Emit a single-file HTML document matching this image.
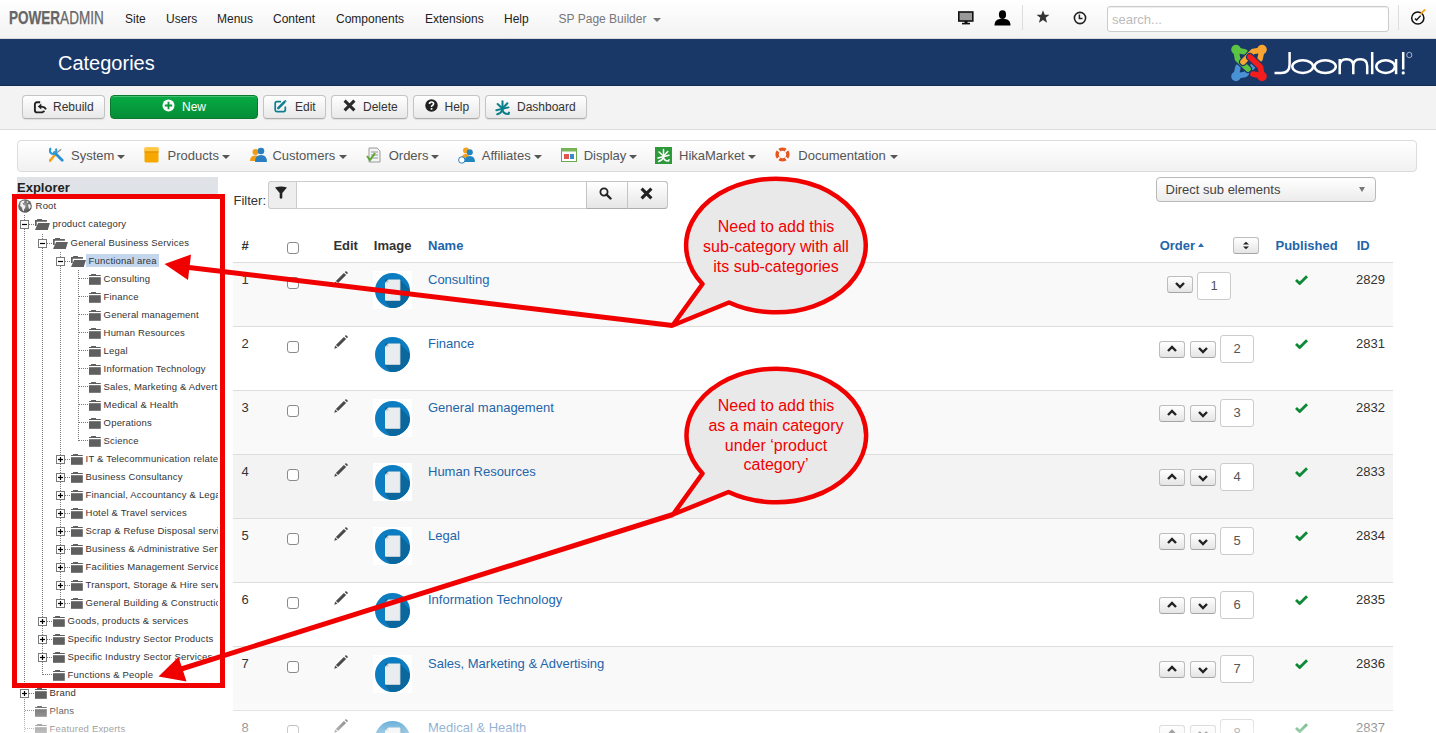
<!DOCTYPE html><html><head><meta charset="utf-8"><style>
*{margin:0;padding:0;box-sizing:border-box}
html,body{width:1436px;height:733px;overflow:hidden;background:#fff;font-family:"Liberation Sans",sans-serif;font-size:13px;color:#333;position:relative}
.abs{position:absolute}
.t{position:absolute;white-space:nowrap;line-height:1}
.nav{position:absolute;left:0;top:0;width:1436px;height:39px;background:linear-gradient(#fff,#f2f2f2);}
.hdr{position:absolute;left:0;top:39px;width:1436px;height:47px;background:#1a3867;border-bottom:1px solid #142d57}
.sub{position:absolute;left:0;top:86px;width:1436px;height:44px;background:#f3f3f3;border-bottom:1px solid #ddd}
.btn{position:absolute;top:95px;height:24px;border:1px solid #c4c4c4;border-bottom-color:#adadad;border-radius:4px;background:linear-gradient(#fff,#e8e8e8);box-shadow:0 1px 1px rgba(0,0,0,.08)}
.bt{position:absolute;top:100.2px;font-size:12px;color:#333;line-height:15px;white-space:nowrap}
.mb{position:absolute;left:17px;top:140px;width:1400px;height:32px;border:1px solid #dcdcdc;border-radius:4px;background:linear-gradient(#fff,#f1f1f1)}
.mt{position:absolute;top:148px;font-size:13px;color:#555;line-height:15px;white-space:nowrap}
.caret{position:absolute;width:0;height:0;border-left:4px solid transparent;border-right:4px solid transparent;border-top:4px solid #555}
.tr{position:absolute;font-size:9.5px;letter-spacing:0.18px;color:#333;line-height:1;white-space:nowrap}
.row{position:absolute;left:233px;width:1160px;height:64px;border-top:1px solid #ddd}
.cb{position:absolute;width:12px;height:12px;border:1px solid #8a8a8a;border-radius:3px;background:#fff}
.ob{position:absolute;width:26px;height:17px;border:1px solid #bdbdbd;border-bottom-color:#a5a5a5;border-radius:3px;background:linear-gradient(#fff,#e5e5e5)}
.oi{position:absolute;width:34px;height:28px;border:1px solid #ccc;border-radius:3px;background:#fff;font-size:13px;color:#555;text-align:center;line-height:26px}
.lnk{color:#2465aa}
</style></head><body>
<div class="nav"></div>
<div class="abs" style="left:0;top:38px;width:1436px;height:1px;background:#d9d9d9"></div>
<div class="t" style="left:9px;top:10.3px;font-size:17.7px;color:#666;-webkit-text-stroke:0.25px #666;transform:scaleX(0.765);transform-origin:0 0"><b>POWER</b>ADMIN</div>
<div class="t" style="left:125px;top:13.1px;font-size:12px;color:#222">Site</div>
<div class="t" style="left:166px;top:13.1px;font-size:12px;color:#222">Users</div>
<div class="t" style="left:217px;top:13.1px;font-size:12px;color:#222">Menus</div>
<div class="t" style="left:273px;top:13.1px;font-size:12px;color:#222">Content</div>
<div class="t" style="left:336px;top:13.1px;font-size:12px;color:#222">Components</div>
<div class="t" style="left:425px;top:13.1px;font-size:12px;color:#222">Extensions</div>
<div class="t" style="left:504px;top:13.1px;font-size:12px;color:#222">Help</div>
<div class="t" style="left:558.6px;top:13.1px;font-size:12px;color:#777">SP Page Builder</div>
<div class="caret" style="left:653px;top:18px;border-top-color:#777"></div>
<svg class="abs" style="left:958px;top:11px" width="16" height="14" viewBox="0 0 16 14"><rect x="0.8" y="1" width="14" height="9" fill="#999" stroke="#111" stroke-width="1.6"/><rect x="6.5" y="10" width="3" height="2" fill="#111"/><rect x="4" y="11.8" width="8" height="1.6" fill="#111"/></svg>
<svg class="abs" style="left:994px;top:10px" width="17" height="16" viewBox="0 0 17 16"><ellipse cx="8.5" cy="4.6" rx="3.6" ry="4.4" fill="#000"/><path d="M0.5 15.5 C0.5 11 3 9.5 6 9 L11 9 C14 9.5 16.5 11 16.5 15.5 Z" fill="#000"/></svg>
<div class="abs" style="left:1022px;top:5px;width:1px;height:25px;background:#ddd"></div>
<svg class="abs" style="left:1036px;top:10px" width="14" height="13" viewBox="0 0 24 23"><path d="M12 0.5 L15 8.5 L23.5 8.6 L16.8 13.8 L19.2 22.5 L12 17.5 L4.8 22.5 L7.2 13.8 L0.5 8.6 L9 8.5 Z" fill="#333"/></svg>
<svg class="abs" style="left:1073px;top:11px" width="14" height="14" viewBox="0 0 14 14"><circle cx="7" cy="7" r="5.6" fill="none" stroke="#222" stroke-width="1.6"/><path d="M6.4 3.6 V7.6 H9.5" fill="none" stroke="#222" stroke-width="1.5"/></svg>
<div class="abs" style="left:1107px;top:6px;width:282px;height:26px;border:1px solid #ccc;border-radius:3px;background:#fff;box-shadow:inset 0 1px 1px rgba(0,0,0,.075)"></div>
<div class="t" style="left:1112px;top:13px;color:#bbb">search...</div>
<div class="abs" style="left:1398px;top:5px;width:1px;height:25px;background:#ddd"></div>
<svg class="abs" style="left:1410px;top:8px" width="18" height="18" viewBox="0 0 18 18"><circle cx="7.8" cy="10" r="6.1" fill="none" stroke="#111" stroke-width="1.5"/><path d="M5 10.6 L6.6 12 L10.6 7.6" fill="none" stroke="#111" stroke-width="1.4"/><path d="M11 5.6 L12.1 4.5 M13 3.6 L14.6 2" stroke="#f7a21b" stroke-width="1.9" stroke-linecap="round"/></svg>
<div class="hdr"></div>
<div class="t" style="left:58px;top:53px;font-size:20px;color:#fff">Categories</div>
<svg class="abs" style="left:1225px;top:42px" width="200" height="45" viewBox="0 0 200 45">
<g transform="translate(6,3)">
<g fill="none" stroke-linecap="round" stroke-linejoin="round">
<path d="M5 31 L7 22 M5 31 L14 29.5 L24 19" stroke="#1a3867" stroke-width="8"/>
<path d="M5 31 L7 22 M5 31 L14 29.5 L24 19" stroke="#4a92d6" stroke-width="5.6"/>
<path d="M5 5 L14 7 M5 5 L6.5 14 L17 24" stroke="#1a3867" stroke-width="8"/>
<path d="M5 5 L14 7 M5 5 L6.5 14 L17 24" stroke="#5bc443" stroke-width="5.6"/>
<path d="M31 5 L29 14 M31 5 L22 6.5 L12 17" stroke="#1a3867" stroke-width="8"/>
<path d="M31 5 L29 14 M31 5 L22 6.5 L12 17" stroke="#f9a531" stroke-width="5.6"/>
<path d="M31 31 L22 29 M31 31 L29.5 22 L19 12" stroke="#1a3867" stroke-width="8"/>
<path d="M31 31 L22 29 M31 31 L29.5 22 L19 12" stroke="#f41c1c" stroke-width="5.6"/>
</g>
<circle cx="5" cy="4.6" r="4.8" fill="#5bc443"/><circle cx="31" cy="4.6" r="4.8" fill="#f9a531"/>
<circle cx="5" cy="31.4" r="4.8" fill="#4a92d6"/><circle cx="31" cy="31.4" r="4.8" fill="#f41c1c"/>
</g>
<g fill="none" stroke="#fff" stroke-width="2.5">
<path d="M64.6 10 V22.5 Q64.6 31 56 31 H49.5"/>
<ellipse cx="77.7" cy="24.6" rx="10.4" ry="6.3"/>
<ellipse cx="100.2" cy="24.6" rx="10.6" ry="6.3"/>
<path d="M114.7 17 V32.2 M114.7 24 Q114.7 17.3 121.4 17.3 Q128.3 17.3 128.3 24 V32.2 M128.3 24 Q128.3 17.3 135.2 17.3 Q142.2 17.3 142.2 24 V32.2"/>
<path d="M147.2 10 V32.2"/>
<ellipse cx="160.6" cy="24.6" rx="9.3" ry="6.3"/>
<path d="M171.1 17 V32.2"/>
<path d="M178.2 10 V27.5"/>
<ellipse cx="184.3" cy="13" rx="2.6" ry="2.7" stroke-width="0.8" stroke="#c8d0e0"/>
</g>
<circle cx="178.2" cy="30.9" r="1.6" fill="#fff"/>
</svg>
<div class="sub"></div>
<div class="btn" style="left:22px;width:83px"></div>
<div class="bt" style="left:53px">Rebuild</div>
<div class="btn" style="left:263px;width:63px"></div>
<div class="bt" style="left:295px">Edit</div>
<div class="btn" style="left:331px;width:77px"></div>
<div class="bt" style="left:363px">Delete</div>
<div class="btn" style="left:413px;width:67px"></div>
<div class="bt" style="left:444.5px">Help</div>
<div class="btn" style="left:485px;width:102px"></div>
<div class="bt" style="left:517px">Dashboard</div>
<div class="abs" style="left:110px;top:95px;width:148px;height:24px;border:1px solid #0a7a2c;border-radius:4px;background:linear-gradient(#07ab45,#058d35);box-shadow:inset 0 1px rgba(255,255,255,.25)"></div>
<div class="bt" style="left:182px;color:#fff">New</div>
<svg class="abs" style="left:33px;top:100px" width="14" height="14" viewBox="0 0 14 14"><path d="M7.2 2.3 H4 Q1.9 2.3 1.9 4.4 V10.2 Q1.9 12.4 4.1 12.4 H9.3 L11.5 11" fill="none" stroke="#222" stroke-width="1.9"/><path d="M4.8 6.5 L8.3 3.6 V9.4 Z" fill="#222"/><path d="M7.5 6.6 Q11.5 6.4 13 9.4" fill="none" stroke="#222" stroke-width="1.8"/></svg>
<svg class="abs" style="left:162.3px;top:99px" width="13" height="13" viewBox="0 0 13 13"><circle cx="6.5" cy="6.5" r="6" fill="#fff"/><path d="M6.5 2.8 V10.2 M2.8 6.5 H10.2" stroke="#06963a" stroke-width="1.8"/></svg>
<svg class="abs" style="left:274px;top:100px" width="13" height="13" viewBox="0 0 13 13"><path d="M7 1.6 H2.8 Q1.2 1.6 1.2 3.3 V10 Q1.2 11.6 2.8 11.6 H9.6 Q11.3 11.6 11.3 10 V6.5" fill="none" stroke="#0f7f8e" stroke-width="1.7"/><path d="M4.3 8.2 L10.3 2.2" stroke="#0f7f8e" stroke-width="2.6" stroke-linecap="round"/><path d="M11.2 1.3 L12 0.5" stroke="#0f7f8e" stroke-width="2.2"/></svg>
<svg class="abs" style="left:342.6px;top:99.4px" width="13" height="13" viewBox="0 0 13 13"><path d="M1.6 1.6 L11.4 11.4 M11.4 1.6 L1.6 11.4" stroke="#2a2a2a" stroke-width="3"/></svg>
<svg class="abs" style="left:425px;top:99.4px" width="13" height="13" viewBox="0 0 13 13"><circle cx="6.5" cy="6.5" r="6.2" fill="#222"/><path d="M4.5 5 Q4.5 3 6.5 3 Q8.6 3 8.6 4.8 Q8.6 6 7.2 6.6 Q6.5 7 6.5 8" fill="none" stroke="#fff" stroke-width="1.6"/><rect x="5.7" y="9" width="1.7" height="1.7" fill="#fff"/></svg>
<svg class="abs" style="left:494px;top:99px" width="17" height="17" viewBox="0 0 17 17"><g stroke="#0b7f8a" stroke-width="2" fill="none" stroke-linecap="round"><path d="M8.5 2.3 V10 Q8.5 15 14.5 15 L15 13.6"/><path d="M3.6 5 L8.5 9.5 L13.4 4.2"/><path d="M2.3 11.3 L14.5 8.4"/><path d="M8.3 11 Q7.2 14.3 3.2 15.2"/></g></svg>
<div class="mb"></div>
<div class="mt" style="left:71px">System</div>
<div class="caret" style="left:117px;top:155px"></div>
<div class="mt" style="left:167.6px">Products</div>
<div class="caret" style="left:222.3px;top:155px"></div>
<div class="mt" style="left:272.4px">Customers</div>
<div class="caret" style="left:338.6px;top:155px"></div>
<div class="mt" style="left:388.7px">Orders</div>
<div class="caret" style="left:431px;top:155px"></div>
<div class="mt" style="left:481.8px">Affiliates</div>
<div class="caret" style="left:533.6px;top:155px"></div>
<div class="mt" style="left:583.7px">Display</div>
<div class="caret" style="left:628.8px;top:155px"></div>
<div class="mt" style="left:679px">HikaMarket</div>
<div class="caret" style="left:747.5px;top:155px"></div>
<div class="mt" style="left:798.3px">Documentation</div>
<div class="caret" style="left:889.5px;top:155px"></div>
<svg class="abs" style="left:49px;top:147px" width="15" height="15" viewBox="0 0 15 15"><path d="M5.6 7.6 L12.2 2.2" stroke="#888" stroke-width="1.1"/><path d="M1 13.6 L5.8 8" stroke="#f5a01a" stroke-width="2.6" stroke-linecap="round"/><path d="M5.5 5.5 L13.2 13.2" stroke="#2a8fd0" stroke-width="2.8" stroke-linecap="round"/><path d="M2 1.2 A3.2 3.2 0 1 0 6.6 1.6" fill="none" stroke="#2a9bd8" stroke-width="2.2"/></svg>
<svg class="abs" style="left:144px;top:147px" width="15" height="16" viewBox="0 0 15 16"><rect x="0.5" y="0.5" width="14" height="15" rx="1.5" fill="#f6a800"/><rect x="0.5" y="0.5" width="14" height="4" fill="#ffc640"/><path d="M0.5 5 H14.5" stroke="#d98b00" stroke-width="1"/></svg>
<svg class="abs" style="left:250px;top:147px" width="17" height="15" viewBox="0 0 17 15"><circle cx="5.5" cy="5" r="3" fill="#f39c12"/><path d="M0 14 Q0 8.5 5.5 8.5 Q9 8.5 10 11 L10 14Z" fill="#f39c12"/><circle cx="11" cy="4" r="3.3" fill="#2a7fc0"/><path d="M5 15 Q5 8 11 8 Q17 8 17 15Z" fill="#2a7fc0"/></svg>
<svg class="abs" style="left:366px;top:147px" width="16" height="16" viewBox="0 0 16 16"><path d="M3 1 H11 L14 4 V15 H3 Z" fill="#f4f4f4" stroke="#9a9a9a"/><path d="M5 5 H12 M5 8 H12 M5 11 H12" stroke="#999"/><path d="M1 9 L4 13 L9 6" fill="none" stroke="#5aa832" stroke-width="2"/></svg>
<svg class="abs" style="left:458px;top:147px" width="17" height="17" viewBox="0 0 17 17"><circle cx="8" cy="3.6" r="3" fill="#f5a01a"/><path d="M3.5 12 Q3.5 7 8 7 Q10 7 11 8 L9 12Z" fill="#f5a01a"/><circle cx="11.8" cy="5.2" r="3" fill="#1f86c0"/><path d="M6.5 15 Q6.5 9 11.8 9 Q17 9 17 15Z" fill="#1f86c0"/><circle cx="3.8" cy="13" r="3.2" fill="#fff" stroke="#2a7fc0" stroke-width="1"/></svg>
<svg class="abs" style="left:561px;top:147px" width="16" height="16" viewBox="0 0 16 16"><rect x="0.5" y="1.5" width="15" height="13" fill="#fff" stroke="#6aaa4a"/><rect x="0.5" y="1.5" width="15" height="3" fill="#78b85a"/><rect x="3" y="7" width="5" height="5" fill="#e2574c"/><rect x="9" y="7" width="4" height="5" fill="#3a8ad0"/></svg>
<svg class="abs" style="left:655px;top:147px" width="17" height="17" viewBox="0 0 17 17"><rect x="0" y="0" width="17" height="17" fill="#2c9a3a"/><g stroke="#fff" stroke-width="1.5" fill="none" stroke-linecap="round"><path d="M8.5 2.5 V9.5 Q8.5 14 13.5 14 L14 12.8"/><path d="M4 5 L8.5 9 L12.8 4.5"/><path d="M3 11 L14 8.3"/><path d="M8.3 10.5 Q7.3 13.6 3.6 14.4"/></g></svg>
<svg class="abs" style="left:775px;top:147px" width="15" height="15" viewBox="0 0 15 15"><circle cx="7.5" cy="7.5" r="5.4" fill="none" stroke="#e8541e" stroke-width="3.4"/><g stroke="#fff" stroke-width="1.8"><path d="M2 2 L4.6 4.6 M13 2 L10.4 4.6 M2 13 L4.6 10.4 M13 13 L10.4 10.4"/></g></svg>
<div class="abs" style="left:17px;top:177px;width:201px;height:19px;background:#dfe2e7"></div>
<div class="t" style="left:17px;top:181px;font-weight:bold;color:#222">Explorer</div>
<div class="abs" style="left:17px;top:196px;width:201px;height:537px;overflow:hidden">
<div class="abs" style="left:-17px;top:-196px;width:1436px;height:733px">
<div class="abs" style="left:24px;top:215px;width:1px;height:518px;background:repeating-linear-gradient(to bottom,#7a7a7a 0 1px,transparent 1px 2px)"></div>
<div class="abs" style="left:42px;top:234px;width:1px;height:441px;background:repeating-linear-gradient(to bottom,#7a7a7a 0 1px,transparent 1px 2px)"></div>
<div class="abs" style="left:60px;top:252px;width:1px;height:351px;background:repeating-linear-gradient(to bottom,#7a7a7a 0 1px,transparent 1px 2px)"></div>
<div class="abs" style="left:78px;top:270px;width:1px;height:171px;background:repeating-linear-gradient(to bottom,#7a7a7a 0 1px,transparent 1px 2px)"></div>
<svg class="abs" style="left:18px;top:198.7px" width="14" height="14" viewBox="0 0 14 14"><defs><radialGradient id="gg" cx="45%" cy="40%" r="65%"><stop offset="0" stop-color="#9a9a9a"/><stop offset="1" stop-color="#4a4a4a"/></radialGradient></defs><circle cx="7" cy="7" r="6.8" fill="url(#gg)"/><path d="M2.5 3.5 Q4 1.5 6.5 1.6 L6 3.5 L4.5 4.2 L5.5 6 L7.5 6.8 L7 9 L6 10.5 L5.8 12.6 L4.5 11 L4 8.5 L2.2 7 Z M8.5 2 L10.5 2.8 L9.6 4.2 Z M10 5.5 L12.2 5.2 L12.8 8 L11 10.5 L10.5 8 Z" fill="#f2f2f2"/></svg>
<div class="tr" style="left:35.6px;top:201.4px;font-size:9.5px">Root</div>
<svg class="abs" style="left:20px;top:220.0px" width="9" height="9" viewBox="0 0 9 9"><rect x="0.5" y="0.5" width="8" height="8" fill="#fff" stroke="#7a7a7a"/><path d="M2 4.5 H7" stroke="#000" stroke-width="1.2"/></svg>
<div class="abs" style="left:29px;top:224px;width:6px;height:1px;background:repeating-linear-gradient(to right,#7a7a7a 0 1px,transparent 1px 2px)"></div>
<svg class="abs" style="left:35px;top:219.0px" width="15" height="11" viewBox="0 0 15 11"><path d="M2.1 0 H7 V1 H11.9 V2.7 H1.7 V7 H0 V1 H2.1 Z" fill="#5f5f5f"/><path d="M3.1 4 H14.9 L12.8 10.9 H0 Z" fill="#5f5f5f"/></svg>
<div class="tr" style="left:52.6px;top:218.95px">product category</div>
<svg class="abs" style="left:38px;top:239.0px" width="9" height="9" viewBox="0 0 9 9"><rect x="0.5" y="0.5" width="8" height="8" fill="#fff" stroke="#7a7a7a"/><path d="M2 4.5 H7" stroke="#000" stroke-width="1.2"/></svg>
<div class="abs" style="left:47px;top:243px;width:6px;height:1px;background:repeating-linear-gradient(to right,#7a7a7a 0 1px,transparent 1px 2px)"></div>
<svg class="abs" style="left:53px;top:238.0px" width="15" height="11" viewBox="0 0 15 11"><path d="M2.1 0 H7 V1 H11.9 V2.7 H1.7 V7 H0 V1 H2.1 Z" fill="#5f5f5f"/><path d="M3.1 4 H14.9 L12.8 10.9 H0 Z" fill="#5f5f5f"/></svg>
<div class="tr" style="left:70.6px;top:237.95px">General Business Services</div>
<svg class="abs" style="left:56px;top:257.0px" width="9" height="9" viewBox="0 0 9 9"><rect x="0.5" y="0.5" width="8" height="8" fill="#fff" stroke="#7a7a7a"/><path d="M2 4.5 H7" stroke="#000" stroke-width="1.2"/></svg>
<div class="abs" style="left:65px;top:261px;width:6px;height:1px;background:repeating-linear-gradient(to right,#7a7a7a 0 1px,transparent 1px 2px)"></div>
<svg class="abs" style="left:71px;top:256.0px" width="15" height="11" viewBox="0 0 15 11"><path d="M2.1 0 H7 V1 H11.9 V2.7 H1.7 V7 H0 V1 H2.1 Z" fill="#5f5f5f"/><path d="M3.1 4 H14.9 L12.8 10.9 H0 Z" fill="#5f5f5f"/></svg>
<div class="abs" style="left:86px;top:254px;width:73px;height:13px;background:#c3d6ee"></div>
<div class="tr" style="left:88.6px;top:255.95px">Functional area</div>
<div class="abs" style="left:79px;top:278px;width:10px;height:1px;background:repeating-linear-gradient(to right,#7a7a7a 0 1px,transparent 1px 2px)"></div>
<svg class="abs" style="left:89.1px;top:274.0px" width="12" height="11" viewBox="0 0 12 11"><path d="M2.1 0 H7 V1 H11.8 V2 H0 V1 H2.1 Z" fill="#5f5f5f"/><rect x="0" y="3.2" width="11.8" height="7.6" fill="#5f5f5f"/></svg>
<div class="tr" style="left:103.6px;top:273.95px">Consulting</div>
<div class="abs" style="left:79px;top:296px;width:10px;height:1px;background:repeating-linear-gradient(to right,#7a7a7a 0 1px,transparent 1px 2px)"></div>
<svg class="abs" style="left:89.1px;top:292.0px" width="12" height="11" viewBox="0 0 12 11"><path d="M2.1 0 H7 V1 H11.8 V2 H0 V1 H2.1 Z" fill="#5f5f5f"/><rect x="0" y="3.2" width="11.8" height="7.6" fill="#5f5f5f"/></svg>
<div class="tr" style="left:103.6px;top:291.95px">Finance</div>
<div class="abs" style="left:79px;top:314px;width:10px;height:1px;background:repeating-linear-gradient(to right,#7a7a7a 0 1px,transparent 1px 2px)"></div>
<svg class="abs" style="left:89.1px;top:310.0px" width="12" height="11" viewBox="0 0 12 11"><path d="M2.1 0 H7 V1 H11.8 V2 H0 V1 H2.1 Z" fill="#5f5f5f"/><rect x="0" y="3.2" width="11.8" height="7.6" fill="#5f5f5f"/></svg>
<div class="tr" style="left:103.6px;top:309.95px">General management</div>
<div class="abs" style="left:79px;top:332px;width:10px;height:1px;background:repeating-linear-gradient(to right,#7a7a7a 0 1px,transparent 1px 2px)"></div>
<svg class="abs" style="left:89.1px;top:328.0px" width="12" height="11" viewBox="0 0 12 11"><path d="M2.1 0 H7 V1 H11.8 V2 H0 V1 H2.1 Z" fill="#5f5f5f"/><rect x="0" y="3.2" width="11.8" height="7.6" fill="#5f5f5f"/></svg>
<div class="tr" style="left:103.6px;top:327.95px">Human Resources</div>
<div class="abs" style="left:79px;top:350px;width:10px;height:1px;background:repeating-linear-gradient(to right,#7a7a7a 0 1px,transparent 1px 2px)"></div>
<svg class="abs" style="left:89.1px;top:346.0px" width="12" height="11" viewBox="0 0 12 11"><path d="M2.1 0 H7 V1 H11.8 V2 H0 V1 H2.1 Z" fill="#5f5f5f"/><rect x="0" y="3.2" width="11.8" height="7.6" fill="#5f5f5f"/></svg>
<div class="tr" style="left:103.6px;top:345.95px">Legal</div>
<div class="abs" style="left:79px;top:368px;width:10px;height:1px;background:repeating-linear-gradient(to right,#7a7a7a 0 1px,transparent 1px 2px)"></div>
<svg class="abs" style="left:89.1px;top:364.0px" width="12" height="11" viewBox="0 0 12 11"><path d="M2.1 0 H7 V1 H11.8 V2 H0 V1 H2.1 Z" fill="#5f5f5f"/><rect x="0" y="3.2" width="11.8" height="7.6" fill="#5f5f5f"/></svg>
<div class="tr" style="left:103.6px;top:363.95px">Information Technology</div>
<div class="abs" style="left:79px;top:386px;width:10px;height:1px;background:repeating-linear-gradient(to right,#7a7a7a 0 1px,transparent 1px 2px)"></div>
<svg class="abs" style="left:89.1px;top:382.0px" width="12" height="11" viewBox="0 0 12 11"><path d="M2.1 0 H7 V1 H11.8 V2 H0 V1 H2.1 Z" fill="#5f5f5f"/><rect x="0" y="3.2" width="11.8" height="7.6" fill="#5f5f5f"/></svg>
<div class="tr" style="left:103.6px;top:381.95px">Sales, Marketing &amp; Advertising</div>
<div class="abs" style="left:79px;top:404px;width:10px;height:1px;background:repeating-linear-gradient(to right,#7a7a7a 0 1px,transparent 1px 2px)"></div>
<svg class="abs" style="left:89.1px;top:400.0px" width="12" height="11" viewBox="0 0 12 11"><path d="M2.1 0 H7 V1 H11.8 V2 H0 V1 H2.1 Z" fill="#5f5f5f"/><rect x="0" y="3.2" width="11.8" height="7.6" fill="#5f5f5f"/></svg>
<div class="tr" style="left:103.6px;top:399.95px">Medical &amp; Health</div>
<div class="abs" style="left:79px;top:422px;width:10px;height:1px;background:repeating-linear-gradient(to right,#7a7a7a 0 1px,transparent 1px 2px)"></div>
<svg class="abs" style="left:89.1px;top:418.0px" width="12" height="11" viewBox="0 0 12 11"><path d="M2.1 0 H7 V1 H11.8 V2 H0 V1 H2.1 Z" fill="#5f5f5f"/><rect x="0" y="3.2" width="11.8" height="7.6" fill="#5f5f5f"/></svg>
<div class="tr" style="left:103.6px;top:417.95px">Operations</div>
<div class="abs" style="left:79px;top:440px;width:10px;height:1px;background:repeating-linear-gradient(to right,#7a7a7a 0 1px,transparent 1px 2px)"></div>
<svg class="abs" style="left:89.1px;top:436.0px" width="12" height="11" viewBox="0 0 12 11"><path d="M2.1 0 H7 V1 H11.8 V2 H0 V1 H2.1 Z" fill="#5f5f5f"/><rect x="0" y="3.2" width="11.8" height="7.6" fill="#5f5f5f"/></svg>
<div class="tr" style="left:103.6px;top:435.95px">Science</div>
<svg class="abs" style="left:56px;top:455.0px" width="9" height="9" viewBox="0 0 9 9"><rect x="0.5" y="0.5" width="8" height="8" fill="#fff" stroke="#7a7a7a"/><path d="M2 4.5 H7" stroke="#000" stroke-width="1.2"/><path d="M4.5 2 V7" stroke="#000" stroke-width="1.2"/></svg>
<div class="abs" style="left:65px;top:459px;width:6px;height:1px;background:repeating-linear-gradient(to right,#7a7a7a 0 1px,transparent 1px 2px)"></div>
<svg class="abs" style="left:71.1px;top:454.0px" width="12" height="11" viewBox="0 0 12 11"><path d="M2.1 0 H7 V1 H11.8 V2 H0 V1 H2.1 Z" fill="#5f5f5f"/><rect x="0" y="3.2" width="11.8" height="7.6" fill="#5f5f5f"/></svg>
<div class="tr" style="left:85.6px;top:453.95px">IT &amp; Telecommunication related</div>
<svg class="abs" style="left:56px;top:473.0px" width="9" height="9" viewBox="0 0 9 9"><rect x="0.5" y="0.5" width="8" height="8" fill="#fff" stroke="#7a7a7a"/><path d="M2 4.5 H7" stroke="#000" stroke-width="1.2"/><path d="M4.5 2 V7" stroke="#000" stroke-width="1.2"/></svg>
<div class="abs" style="left:65px;top:477px;width:6px;height:1px;background:repeating-linear-gradient(to right,#7a7a7a 0 1px,transparent 1px 2px)"></div>
<svg class="abs" style="left:71.1px;top:472.0px" width="12" height="11" viewBox="0 0 12 11"><path d="M2.1 0 H7 V1 H11.8 V2 H0 V1 H2.1 Z" fill="#5f5f5f"/><rect x="0" y="3.2" width="11.8" height="7.6" fill="#5f5f5f"/></svg>
<div class="tr" style="left:85.6px;top:471.95px">Business Consultancy</div>
<svg class="abs" style="left:56px;top:491.0px" width="9" height="9" viewBox="0 0 9 9"><rect x="0.5" y="0.5" width="8" height="8" fill="#fff" stroke="#7a7a7a"/><path d="M2 4.5 H7" stroke="#000" stroke-width="1.2"/><path d="M4.5 2 V7" stroke="#000" stroke-width="1.2"/></svg>
<div class="abs" style="left:65px;top:495px;width:6px;height:1px;background:repeating-linear-gradient(to right,#7a7a7a 0 1px,transparent 1px 2px)"></div>
<svg class="abs" style="left:71.1px;top:490.0px" width="12" height="11" viewBox="0 0 12 11"><path d="M2.1 0 H7 V1 H11.8 V2 H0 V1 H2.1 Z" fill="#5f5f5f"/><rect x="0" y="3.2" width="11.8" height="7.6" fill="#5f5f5f"/></svg>
<div class="tr" style="left:85.6px;top:489.95px">Financial, Accountancy &amp; Legal</div>
<svg class="abs" style="left:56px;top:509.0px" width="9" height="9" viewBox="0 0 9 9"><rect x="0.5" y="0.5" width="8" height="8" fill="#fff" stroke="#7a7a7a"/><path d="M2 4.5 H7" stroke="#000" stroke-width="1.2"/><path d="M4.5 2 V7" stroke="#000" stroke-width="1.2"/></svg>
<div class="abs" style="left:65px;top:513px;width:6px;height:1px;background:repeating-linear-gradient(to right,#7a7a7a 0 1px,transparent 1px 2px)"></div>
<svg class="abs" style="left:71.1px;top:508.0px" width="12" height="11" viewBox="0 0 12 11"><path d="M2.1 0 H7 V1 H11.8 V2 H0 V1 H2.1 Z" fill="#5f5f5f"/><rect x="0" y="3.2" width="11.8" height="7.6" fill="#5f5f5f"/></svg>
<div class="tr" style="left:85.6px;top:507.95px">Hotel &amp; Travel services</div>
<svg class="abs" style="left:56px;top:527.0px" width="9" height="9" viewBox="0 0 9 9"><rect x="0.5" y="0.5" width="8" height="8" fill="#fff" stroke="#7a7a7a"/><path d="M2 4.5 H7" stroke="#000" stroke-width="1.2"/><path d="M4.5 2 V7" stroke="#000" stroke-width="1.2"/></svg>
<div class="abs" style="left:65px;top:531px;width:6px;height:1px;background:repeating-linear-gradient(to right,#7a7a7a 0 1px,transparent 1px 2px)"></div>
<svg class="abs" style="left:71.1px;top:526.0px" width="12" height="11" viewBox="0 0 12 11"><path d="M2.1 0 H7 V1 H11.8 V2 H0 V1 H2.1 Z" fill="#5f5f5f"/><rect x="0" y="3.2" width="11.8" height="7.6" fill="#5f5f5f"/></svg>
<div class="tr" style="left:85.6px;top:525.95px">Scrap &amp; Refuse Disposal services</div>
<svg class="abs" style="left:56px;top:545.0px" width="9" height="9" viewBox="0 0 9 9"><rect x="0.5" y="0.5" width="8" height="8" fill="#fff" stroke="#7a7a7a"/><path d="M2 4.5 H7" stroke="#000" stroke-width="1.2"/><path d="M4.5 2 V7" stroke="#000" stroke-width="1.2"/></svg>
<div class="abs" style="left:65px;top:549px;width:6px;height:1px;background:repeating-linear-gradient(to right,#7a7a7a 0 1px,transparent 1px 2px)"></div>
<svg class="abs" style="left:71.1px;top:544.0px" width="12" height="11" viewBox="0 0 12 11"><path d="M2.1 0 H7 V1 H11.8 V2 H0 V1 H2.1 Z" fill="#5f5f5f"/><rect x="0" y="3.2" width="11.8" height="7.6" fill="#5f5f5f"/></svg>
<div class="tr" style="left:85.6px;top:543.95px">Business &amp; Administrative Services</div>
<svg class="abs" style="left:56px;top:563.0px" width="9" height="9" viewBox="0 0 9 9"><rect x="0.5" y="0.5" width="8" height="8" fill="#fff" stroke="#7a7a7a"/><path d="M2 4.5 H7" stroke="#000" stroke-width="1.2"/><path d="M4.5 2 V7" stroke="#000" stroke-width="1.2"/></svg>
<div class="abs" style="left:65px;top:567px;width:6px;height:1px;background:repeating-linear-gradient(to right,#7a7a7a 0 1px,transparent 1px 2px)"></div>
<svg class="abs" style="left:71.1px;top:562.0px" width="12" height="11" viewBox="0 0 12 11"><path d="M2.1 0 H7 V1 H11.8 V2 H0 V1 H2.1 Z" fill="#5f5f5f"/><rect x="0" y="3.2" width="11.8" height="7.6" fill="#5f5f5f"/></svg>
<div class="tr" style="left:85.6px;top:561.95px">Facilities Management Services</div>
<svg class="abs" style="left:56px;top:581.0px" width="9" height="9" viewBox="0 0 9 9"><rect x="0.5" y="0.5" width="8" height="8" fill="#fff" stroke="#7a7a7a"/><path d="M2 4.5 H7" stroke="#000" stroke-width="1.2"/><path d="M4.5 2 V7" stroke="#000" stroke-width="1.2"/></svg>
<div class="abs" style="left:65px;top:585px;width:6px;height:1px;background:repeating-linear-gradient(to right,#7a7a7a 0 1px,transparent 1px 2px)"></div>
<svg class="abs" style="left:71.1px;top:580.0px" width="12" height="11" viewBox="0 0 12 11"><path d="M2.1 0 H7 V1 H11.8 V2 H0 V1 H2.1 Z" fill="#5f5f5f"/><rect x="0" y="3.2" width="11.8" height="7.6" fill="#5f5f5f"/></svg>
<div class="tr" style="left:85.6px;top:579.95px">Transport, Storage &amp; Hire services</div>
<svg class="abs" style="left:56px;top:599.0px" width="9" height="9" viewBox="0 0 9 9"><rect x="0.5" y="0.5" width="8" height="8" fill="#fff" stroke="#7a7a7a"/><path d="M2 4.5 H7" stroke="#000" stroke-width="1.2"/><path d="M4.5 2 V7" stroke="#000" stroke-width="1.2"/></svg>
<div class="abs" style="left:65px;top:603px;width:6px;height:1px;background:repeating-linear-gradient(to right,#7a7a7a 0 1px,transparent 1px 2px)"></div>
<svg class="abs" style="left:71.1px;top:598.0px" width="12" height="11" viewBox="0 0 12 11"><path d="M2.1 0 H7 V1 H11.8 V2 H0 V1 H2.1 Z" fill="#5f5f5f"/><rect x="0" y="3.2" width="11.8" height="7.6" fill="#5f5f5f"/></svg>
<div class="tr" style="left:85.6px;top:597.95px">General Building &amp; Construction</div>
<svg class="abs" style="left:38px;top:617.0px" width="9" height="9" viewBox="0 0 9 9"><rect x="0.5" y="0.5" width="8" height="8" fill="#fff" stroke="#7a7a7a"/><path d="M2 4.5 H7" stroke="#000" stroke-width="1.2"/><path d="M4.5 2 V7" stroke="#000" stroke-width="1.2"/></svg>
<div class="abs" style="left:47px;top:621px;width:6px;height:1px;background:repeating-linear-gradient(to right,#7a7a7a 0 1px,transparent 1px 2px)"></div>
<svg class="abs" style="left:53.1px;top:616.0px" width="12" height="11" viewBox="0 0 12 11"><path d="M2.1 0 H7 V1 H11.8 V2 H0 V1 H2.1 Z" fill="#5f5f5f"/><rect x="0" y="3.2" width="11.8" height="7.6" fill="#5f5f5f"/></svg>
<div class="tr" style="left:67.6px;top:615.95px">Goods, products &amp; services</div>
<svg class="abs" style="left:38px;top:635.0px" width="9" height="9" viewBox="0 0 9 9"><rect x="0.5" y="0.5" width="8" height="8" fill="#fff" stroke="#7a7a7a"/><path d="M2 4.5 H7" stroke="#000" stroke-width="1.2"/><path d="M4.5 2 V7" stroke="#000" stroke-width="1.2"/></svg>
<div class="abs" style="left:47px;top:639px;width:6px;height:1px;background:repeating-linear-gradient(to right,#7a7a7a 0 1px,transparent 1px 2px)"></div>
<svg class="abs" style="left:53.1px;top:634.0px" width="12" height="11" viewBox="0 0 12 11"><path d="M2.1 0 H7 V1 H11.8 V2 H0 V1 H2.1 Z" fill="#5f5f5f"/><rect x="0" y="3.2" width="11.8" height="7.6" fill="#5f5f5f"/></svg>
<div class="tr" style="left:67.6px;top:633.95px">Specific Industry Sector Products</div>
<svg class="abs" style="left:38px;top:653.0px" width="9" height="9" viewBox="0 0 9 9"><rect x="0.5" y="0.5" width="8" height="8" fill="#fff" stroke="#7a7a7a"/><path d="M2 4.5 H7" stroke="#000" stroke-width="1.2"/><path d="M4.5 2 V7" stroke="#000" stroke-width="1.2"/></svg>
<div class="abs" style="left:47px;top:657px;width:6px;height:1px;background:repeating-linear-gradient(to right,#7a7a7a 0 1px,transparent 1px 2px)"></div>
<svg class="abs" style="left:53.1px;top:652.0px" width="12" height="11" viewBox="0 0 12 11"><path d="M2.1 0 H7 V1 H11.8 V2 H0 V1 H2.1 Z" fill="#5f5f5f"/><rect x="0" y="3.2" width="11.8" height="7.6" fill="#5f5f5f"/></svg>
<div class="tr" style="left:67.6px;top:651.95px">Specific Industry Sector Services</div>
<div class="abs" style="left:43px;top:674px;width:10px;height:1px;background:repeating-linear-gradient(to right,#7a7a7a 0 1px,transparent 1px 2px)"></div>
<svg class="abs" style="left:53.1px;top:670.0px" width="12" height="11" viewBox="0 0 12 11"><path d="M2.1 0 H7 V1 H11.8 V2 H0 V1 H2.1 Z" fill="#5f5f5f"/><rect x="0" y="3.2" width="11.8" height="7.6" fill="#5f5f5f"/></svg>
<div class="tr" style="left:67.6px;top:669.95px">Functions &amp; People</div>
<svg class="abs" style="left:20px;top:689.0px" width="9" height="9" viewBox="0 0 9 9"><rect x="0.5" y="0.5" width="8" height="8" fill="#fff" stroke="#7a7a7a"/><path d="M2 4.5 H7" stroke="#000" stroke-width="1.2"/><path d="M4.5 2 V7" stroke="#000" stroke-width="1.2"/></svg>
<div class="abs" style="left:29px;top:693px;width:6px;height:1px;background:repeating-linear-gradient(to right,#7a7a7a 0 1px,transparent 1px 2px)"></div>
<svg class="abs" style="left:35.1px;top:688.0px" width="12" height="11" viewBox="0 0 12 11"><path d="M2.1 0 H7 V1 H11.8 V2 H0 V1 H2.1 Z" fill="#5f5f5f"/><rect x="0" y="3.2" width="11.8" height="7.6" fill="#5f5f5f"/></svg>
<div class="tr" style="left:49.6px;top:687.95px">Brand</div>
<div class="abs" style="left:25px;top:710px;width:10px;height:1px;background:repeating-linear-gradient(to right,#7a7a7a 0 1px,transparent 1px 2px)"></div>
<svg class="abs" style="left:35.1px;top:706.0px" width="12" height="11" viewBox="0 0 12 11"><path d="M2.1 0 H7 V1 H11.8 V2 H0 V1 H2.1 Z" fill="#5f5f5f"/><rect x="0" y="3.2" width="11.8" height="7.6" fill="#5f5f5f"/></svg>
<div class="tr" style="left:49.6px;top:705.95px">Plans</div>
<div class="abs" style="left:25px;top:728px;width:10px;height:1px;background:repeating-linear-gradient(to right,#7a7a7a 0 1px,transparent 1px 2px)"></div>
<svg class="abs" style="left:35.1px;top:724.0px" width="12" height="11" viewBox="0 0 12 11"><path d="M2.1 0 H7 V1 H11.8 V2 H0 V1 H2.1 Z" fill="#5f5f5f"/><rect x="0" y="3.2" width="11.8" height="7.6" fill="#5f5f5f"/></svg>
<div class="tr" style="left:49.6px;top:723.95px">Featured Experts</div>
</div></div>
<div class="t" style="left:233.5px;top:194px;color:#333">Filter:</div>
<div class="abs" style="left:268px;top:181px;width:400px;height:28px;border:1px solid #ccc;border-radius:3px;background:#fff"></div>
<div class="abs" style="left:268px;top:181px;width:29px;height:28px;border:1px solid #ccc;border-radius:3px 0 0 3px;background:#eee"></div>
<div class="abs" style="left:586px;top:181px;width:42px;height:28px;border:1px solid #c4c4c4;border-bottom-color:#adadad;background:linear-gradient(#fff,#e6e6e6)"></div>
<div class="abs" style="left:627px;top:181px;width:41px;height:28px;border:1px solid #c4c4c4;border-bottom-color:#adadad;border-radius:0 4px 4px 0;background:linear-gradient(#fff,#e6e6e6)"></div>
<svg class="abs" style="left:274px;top:186px" width="14" height="14" viewBox="0 0 14 14"><path d="M1 1.5 Q7 -0.5 13 1.5 L8.3 7 V12 Q7 13.5 5.7 12 V7 Z" fill="#222"/></svg>
<svg class="abs" style="left:599px;top:187px" width="13" height="13" viewBox="0 0 13 13"><circle cx="5" cy="5" r="3.6" fill="none" stroke="#222" stroke-width="1.8"/><path d="M7.5 7.5 L11.5 11.5" stroke="#222" stroke-width="2.4" stroke-linecap="round"/></svg>
<svg class="abs" style="left:639.5px;top:187px" width="13" height="13" viewBox="0 0 13 13"><path d="M1.6 1.6 L11.4 11.4 M11.4 1.6 L1.6 11.4" stroke="#222" stroke-width="3.1"/></svg>
<div class="abs" style="left:1156px;top:177px;width:220px;height:25px;border:1px solid #b9b9b9;border-radius:4px;background:linear-gradient(#fff,#ececec)"></div>
<div class="t" style="left:1165.5px;top:182.8px;color:#444">Direct sub elements</div>
<div class="abs" style="left:1359px;top:187px;width:0;height:0;border-left:3.5px solid transparent;border-right:3.5px solid transparent;border-top:5px solid #777"></div>
<div class="t" style="left:241.4px;top:239px;font-weight:bold;color:#333">#</div>
<div class="cb" style="left:287px;top:242px"></div>
<div class="t" style="left:333.4px;top:239px;font-weight:bold;color:#333">Edit</div>
<div class="t" style="left:373.8px;top:239px;font-weight:bold;color:#333">Image</div>
<div class="t lnk" style="left:428px;top:239px;font-weight:bold">Name</div>
<div class="t lnk" style="left:1159.7px;top:239px;font-weight:bold">Order</div>
<div class="abs" style="left:1198px;top:243px;width:0;height:0;border-left:3.5px solid transparent;border-right:3.5px solid transparent;border-bottom:4px solid #2a6db0"></div>
<div class="ob" style="left:1233px;top:237px;width:26px;height:17px"></div>
<svg class="abs" style="left:1242px;top:241px" width="8" height="9" viewBox="0 0 8 9"><path d="M1 3.5 L4 0.8 L7 3.5 Z M1 5.5 L4 8.2 L7 5.5 Z" fill="#222"/></svg>
<div class="t lnk" style="left:1275.5px;top:239px;font-weight:bold">Published</div>
<div class="t lnk" style="left:1356.7px;top:239px;font-weight:bold">ID</div>
<div class="row" style="top:262px;background:#f9f9f9"></div>
<div class="t" style="left:241.5px;top:272.7px;color:#333">1</div>
<div class="cb" style="left:287px;top:277px"></div>
<svg class="abs" style="left:334px;top:271px" width="14" height="14" viewBox="0 0 14 14"><path d="M0.3 13.7 L1.2 10.6 L3.4 12.8 Z" fill="#4a4a4a"/><path d="M1.9 9.9 L9.9 1.9 L12.1 4.1 L4.1 12.1 Z" fill="#4a4a4a"/><path d="M10.7 1.1 L11.4 0.4 Q12 -0.1 12.6 0.4 L13.6 1.4 Q14.1 2 13.6 2.6 L12.9 3.3 Z" fill="#4a4a4a"/></svg>
<div class="abs" style="left:373px;top:271px;width:39px;height:38px;background:#fff"></div>
<svg class="abs" style="left:375px;top:272.5px" width="35" height="35" viewBox="0 0 35 35"><defs><clipPath id="c0"><circle cx="17.5" cy="17.5" r="17.5"/></clipPath></defs><circle cx="17.5" cy="17.5" r="17.5" fill="#0b7dc0"/><path d="M10 6.5 L25 6.5 L35 17 L35 35 L15 35 L10 28 Z" fill="#0a689e" clip-path="url(#c0)"/><path d="M13.5 6.5 H25 V27.5 H10 V10 Z" fill="#e9edf0"/><path d="M10 10 L13.5 6.5 V10 Z" fill="#c9cdd0"/><path d="M25 7 V27.5 H11" fill="none" stroke="#cfd3d6" stroke-width="0.8"/></svg>
<div class="t lnk" style="left:428px;top:272.7px">Consulting</div>
<div class="ob" style="left:1167px;top:276px;width:26px;height:17px"></div>
<svg class="abs" style="left:1175px;top:281px" width="10" height="8" viewBox="0 0 10 8"><path d="M1 2 L5 6 L9 2" fill="none" stroke="#222" stroke-width="2.4"/></svg>
<div class="oi" style="left:1197px;top:271.5px">1</div>
<svg class="abs" style="left:1295px;top:275px" width="13" height="10" viewBox="0 0 13 10"><path d="M1 5 L4.7 8.5 L12 1.2" fill="none" stroke="#0d8a36" stroke-width="2.8"/></svg>
<div class="t" style="left:1356px;top:272.7px;color:#333">2829</div>
<div class="row" style="top:326px;background:#fff"></div>
<div class="t" style="left:241.5px;top:336.7px;color:#333">2</div>
<div class="cb" style="left:287px;top:341px"></div>
<svg class="abs" style="left:334px;top:335px" width="14" height="14" viewBox="0 0 14 14"><path d="M0.3 13.7 L1.2 10.6 L3.4 12.8 Z" fill="#4a4a4a"/><path d="M1.9 9.9 L9.9 1.9 L12.1 4.1 L4.1 12.1 Z" fill="#4a4a4a"/><path d="M10.7 1.1 L11.4 0.4 Q12 -0.1 12.6 0.4 L13.6 1.4 Q14.1 2 13.6 2.6 L12.9 3.3 Z" fill="#4a4a4a"/></svg>
<div class="abs" style="left:373px;top:335px;width:39px;height:38px;background:#fff"></div>
<svg class="abs" style="left:375px;top:336.5px" width="35" height="35" viewBox="0 0 35 35"><defs><clipPath id="c1"><circle cx="17.5" cy="17.5" r="17.5"/></clipPath></defs><circle cx="17.5" cy="17.5" r="17.5" fill="#0b7dc0"/><path d="M10 6.5 L25 6.5 L35 17 L35 35 L15 35 L10 28 Z" fill="#0a689e" clip-path="url(#c1)"/><path d="M13.5 6.5 H25 V27.5 H10 V10 Z" fill="#e9edf0"/><path d="M10 10 L13.5 6.5 V10 Z" fill="#c9cdd0"/><path d="M25 7 V27.5 H11" fill="none" stroke="#cfd3d6" stroke-width="0.8"/></svg>
<div class="t lnk" style="left:428px;top:336.7px">Finance</div>
<div class="ob" style="left:1159px;top:341px"></div>
<svg class="abs" style="left:1167px;top:345px" width="10" height="8" viewBox="0 0 10 8"><path d="M1 6 L5 2 L9 6" fill="none" stroke="#222" stroke-width="2.4"/></svg>
<div class="ob" style="left:1190px;top:341px"></div>
<svg class="abs" style="left:1198px;top:346px" width="10" height="8" viewBox="0 0 10 8"><path d="M1 2 L5 6 L9 2" fill="none" stroke="#222" stroke-width="2.4"/></svg>
<div class="oi" style="left:1220px;top:335px">2</div>
<svg class="abs" style="left:1295px;top:339px" width="13" height="10" viewBox="0 0 13 10"><path d="M1 5 L4.7 8.5 L12 1.2" fill="none" stroke="#0d8a36" stroke-width="2.8"/></svg>
<div class="t" style="left:1356px;top:336.7px;color:#333">2831</div>
<div class="row" style="top:390px;background:#f9f9f9"></div>
<div class="t" style="left:241.5px;top:400.7px;color:#333">3</div>
<div class="cb" style="left:287px;top:405px"></div>
<svg class="abs" style="left:334px;top:399px" width="14" height="14" viewBox="0 0 14 14"><path d="M0.3 13.7 L1.2 10.6 L3.4 12.8 Z" fill="#4a4a4a"/><path d="M1.9 9.9 L9.9 1.9 L12.1 4.1 L4.1 12.1 Z" fill="#4a4a4a"/><path d="M10.7 1.1 L11.4 0.4 Q12 -0.1 12.6 0.4 L13.6 1.4 Q14.1 2 13.6 2.6 L12.9 3.3 Z" fill="#4a4a4a"/></svg>
<div class="abs" style="left:373px;top:399px;width:39px;height:38px;background:#fff"></div>
<svg class="abs" style="left:375px;top:400.5px" width="35" height="35" viewBox="0 0 35 35"><defs><clipPath id="c2"><circle cx="17.5" cy="17.5" r="17.5"/></clipPath></defs><circle cx="17.5" cy="17.5" r="17.5" fill="#0b7dc0"/><path d="M10 6.5 L25 6.5 L35 17 L35 35 L15 35 L10 28 Z" fill="#0a689e" clip-path="url(#c2)"/><path d="M13.5 6.5 H25 V27.5 H10 V10 Z" fill="#e9edf0"/><path d="M10 10 L13.5 6.5 V10 Z" fill="#c9cdd0"/><path d="M25 7 V27.5 H11" fill="none" stroke="#cfd3d6" stroke-width="0.8"/></svg>
<div class="t lnk" style="left:428px;top:400.7px">General management</div>
<div class="ob" style="left:1159px;top:405px"></div>
<svg class="abs" style="left:1167px;top:409px" width="10" height="8" viewBox="0 0 10 8"><path d="M1 6 L5 2 L9 6" fill="none" stroke="#222" stroke-width="2.4"/></svg>
<div class="ob" style="left:1190px;top:405px"></div>
<svg class="abs" style="left:1198px;top:410px" width="10" height="8" viewBox="0 0 10 8"><path d="M1 2 L5 6 L9 2" fill="none" stroke="#222" stroke-width="2.4"/></svg>
<div class="oi" style="left:1220px;top:399px">3</div>
<svg class="abs" style="left:1295px;top:403px" width="13" height="10" viewBox="0 0 13 10"><path d="M1 5 L4.7 8.5 L12 1.2" fill="none" stroke="#0d8a36" stroke-width="2.8"/></svg>
<div class="t" style="left:1356px;top:400.7px;color:#333">2832</div>
<div class="row" style="top:454px;background:#f3f3f3"></div>
<div class="t" style="left:241.5px;top:464.7px;color:#333">4</div>
<div class="cb" style="left:287px;top:469px"></div>
<svg class="abs" style="left:334px;top:463px" width="14" height="14" viewBox="0 0 14 14"><path d="M0.3 13.7 L1.2 10.6 L3.4 12.8 Z" fill="#4a4a4a"/><path d="M1.9 9.9 L9.9 1.9 L12.1 4.1 L4.1 12.1 Z" fill="#4a4a4a"/><path d="M10.7 1.1 L11.4 0.4 Q12 -0.1 12.6 0.4 L13.6 1.4 Q14.1 2 13.6 2.6 L12.9 3.3 Z" fill="#4a4a4a"/></svg>
<div class="abs" style="left:373px;top:463px;width:39px;height:38px;background:#fff"></div>
<svg class="abs" style="left:375px;top:464.5px" width="35" height="35" viewBox="0 0 35 35"><defs><clipPath id="c3"><circle cx="17.5" cy="17.5" r="17.5"/></clipPath></defs><circle cx="17.5" cy="17.5" r="17.5" fill="#0b7dc0"/><path d="M10 6.5 L25 6.5 L35 17 L35 35 L15 35 L10 28 Z" fill="#0a689e" clip-path="url(#c3)"/><path d="M13.5 6.5 H25 V27.5 H10 V10 Z" fill="#e9edf0"/><path d="M10 10 L13.5 6.5 V10 Z" fill="#c9cdd0"/><path d="M25 7 V27.5 H11" fill="none" stroke="#cfd3d6" stroke-width="0.8"/></svg>
<div class="t lnk" style="left:428px;top:464.7px">Human Resources</div>
<div class="ob" style="left:1159px;top:469px"></div>
<svg class="abs" style="left:1167px;top:473px" width="10" height="8" viewBox="0 0 10 8"><path d="M1 6 L5 2 L9 6" fill="none" stroke="#222" stroke-width="2.4"/></svg>
<div class="ob" style="left:1190px;top:469px"></div>
<svg class="abs" style="left:1198px;top:474px" width="10" height="8" viewBox="0 0 10 8"><path d="M1 2 L5 6 L9 2" fill="none" stroke="#222" stroke-width="2.4"/></svg>
<div class="oi" style="left:1220px;top:463px">4</div>
<svg class="abs" style="left:1295px;top:467px" width="13" height="10" viewBox="0 0 13 10"><path d="M1 5 L4.7 8.5 L12 1.2" fill="none" stroke="#0d8a36" stroke-width="2.8"/></svg>
<div class="t" style="left:1356px;top:464.7px;color:#333">2833</div>
<div class="row" style="top:518px;background:#f9f9f9"></div>
<div class="t" style="left:241.5px;top:528.7px;color:#333">5</div>
<div class="cb" style="left:287px;top:533px"></div>
<svg class="abs" style="left:334px;top:527px" width="14" height="14" viewBox="0 0 14 14"><path d="M0.3 13.7 L1.2 10.6 L3.4 12.8 Z" fill="#4a4a4a"/><path d="M1.9 9.9 L9.9 1.9 L12.1 4.1 L4.1 12.1 Z" fill="#4a4a4a"/><path d="M10.7 1.1 L11.4 0.4 Q12 -0.1 12.6 0.4 L13.6 1.4 Q14.1 2 13.6 2.6 L12.9 3.3 Z" fill="#4a4a4a"/></svg>
<div class="abs" style="left:373px;top:527px;width:39px;height:38px;background:#fff"></div>
<svg class="abs" style="left:375px;top:528.5px" width="35" height="35" viewBox="0 0 35 35"><defs><clipPath id="c4"><circle cx="17.5" cy="17.5" r="17.5"/></clipPath></defs><circle cx="17.5" cy="17.5" r="17.5" fill="#0b7dc0"/><path d="M10 6.5 L25 6.5 L35 17 L35 35 L15 35 L10 28 Z" fill="#0a689e" clip-path="url(#c4)"/><path d="M13.5 6.5 H25 V27.5 H10 V10 Z" fill="#e9edf0"/><path d="M10 10 L13.5 6.5 V10 Z" fill="#c9cdd0"/><path d="M25 7 V27.5 H11" fill="none" stroke="#cfd3d6" stroke-width="0.8"/></svg>
<div class="t lnk" style="left:428px;top:528.7px">Legal</div>
<div class="ob" style="left:1159px;top:533px"></div>
<svg class="abs" style="left:1167px;top:537px" width="10" height="8" viewBox="0 0 10 8"><path d="M1 6 L5 2 L9 6" fill="none" stroke="#222" stroke-width="2.4"/></svg>
<div class="ob" style="left:1190px;top:533px"></div>
<svg class="abs" style="left:1198px;top:538px" width="10" height="8" viewBox="0 0 10 8"><path d="M1 2 L5 6 L9 2" fill="none" stroke="#222" stroke-width="2.4"/></svg>
<div class="oi" style="left:1220px;top:527px">5</div>
<svg class="abs" style="left:1295px;top:531px" width="13" height="10" viewBox="0 0 13 10"><path d="M1 5 L4.7 8.5 L12 1.2" fill="none" stroke="#0d8a36" stroke-width="2.8"/></svg>
<div class="t" style="left:1356px;top:528.7px;color:#333">2834</div>
<div class="row" style="top:582px;background:#fff"></div>
<div class="t" style="left:241.5px;top:592.7px;color:#333">6</div>
<div class="cb" style="left:287px;top:597px"></div>
<svg class="abs" style="left:334px;top:591px" width="14" height="14" viewBox="0 0 14 14"><path d="M0.3 13.7 L1.2 10.6 L3.4 12.8 Z" fill="#4a4a4a"/><path d="M1.9 9.9 L9.9 1.9 L12.1 4.1 L4.1 12.1 Z" fill="#4a4a4a"/><path d="M10.7 1.1 L11.4 0.4 Q12 -0.1 12.6 0.4 L13.6 1.4 Q14.1 2 13.6 2.6 L12.9 3.3 Z" fill="#4a4a4a"/></svg>
<div class="abs" style="left:373px;top:591px;width:39px;height:38px;background:#fff"></div>
<svg class="abs" style="left:375px;top:592.5px" width="35" height="35" viewBox="0 0 35 35"><defs><clipPath id="c5"><circle cx="17.5" cy="17.5" r="17.5"/></clipPath></defs><circle cx="17.5" cy="17.5" r="17.5" fill="#0b7dc0"/><path d="M10 6.5 L25 6.5 L35 17 L35 35 L15 35 L10 28 Z" fill="#0a689e" clip-path="url(#c5)"/><path d="M13.5 6.5 H25 V27.5 H10 V10 Z" fill="#e9edf0"/><path d="M10 10 L13.5 6.5 V10 Z" fill="#c9cdd0"/><path d="M25 7 V27.5 H11" fill="none" stroke="#cfd3d6" stroke-width="0.8"/></svg>
<div class="t lnk" style="left:428px;top:592.7px">Information Technology</div>
<div class="ob" style="left:1159px;top:597px"></div>
<svg class="abs" style="left:1167px;top:601px" width="10" height="8" viewBox="0 0 10 8"><path d="M1 6 L5 2 L9 6" fill="none" stroke="#222" stroke-width="2.4"/></svg>
<div class="ob" style="left:1190px;top:597px"></div>
<svg class="abs" style="left:1198px;top:602px" width="10" height="8" viewBox="0 0 10 8"><path d="M1 2 L5 6 L9 2" fill="none" stroke="#222" stroke-width="2.4"/></svg>
<div class="oi" style="left:1220px;top:591px">6</div>
<svg class="abs" style="left:1295px;top:595px" width="13" height="10" viewBox="0 0 13 10"><path d="M1 5 L4.7 8.5 L12 1.2" fill="none" stroke="#0d8a36" stroke-width="2.8"/></svg>
<div class="t" style="left:1356px;top:592.7px;color:#333">2835</div>
<div class="row" style="top:646px;background:#f9f9f9"></div>
<div class="t" style="left:241.5px;top:656.7px;color:#333">7</div>
<div class="cb" style="left:287px;top:661px"></div>
<svg class="abs" style="left:334px;top:655px" width="14" height="14" viewBox="0 0 14 14"><path d="M0.3 13.7 L1.2 10.6 L3.4 12.8 Z" fill="#4a4a4a"/><path d="M1.9 9.9 L9.9 1.9 L12.1 4.1 L4.1 12.1 Z" fill="#4a4a4a"/><path d="M10.7 1.1 L11.4 0.4 Q12 -0.1 12.6 0.4 L13.6 1.4 Q14.1 2 13.6 2.6 L12.9 3.3 Z" fill="#4a4a4a"/></svg>
<div class="abs" style="left:373px;top:655px;width:39px;height:38px;background:#fff"></div>
<svg class="abs" style="left:375px;top:656.5px" width="35" height="35" viewBox="0 0 35 35"><defs><clipPath id="c6"><circle cx="17.5" cy="17.5" r="17.5"/></clipPath></defs><circle cx="17.5" cy="17.5" r="17.5" fill="#0b7dc0"/><path d="M10 6.5 L25 6.5 L35 17 L35 35 L15 35 L10 28 Z" fill="#0a689e" clip-path="url(#c6)"/><path d="M13.5 6.5 H25 V27.5 H10 V10 Z" fill="#e9edf0"/><path d="M10 10 L13.5 6.5 V10 Z" fill="#c9cdd0"/><path d="M25 7 V27.5 H11" fill="none" stroke="#cfd3d6" stroke-width="0.8"/></svg>
<div class="t lnk" style="left:428px;top:656.7px">Sales, Marketing &amp; Advertising</div>
<div class="ob" style="left:1159px;top:661px"></div>
<svg class="abs" style="left:1167px;top:665px" width="10" height="8" viewBox="0 0 10 8"><path d="M1 6 L5 2 L9 6" fill="none" stroke="#222" stroke-width="2.4"/></svg>
<div class="ob" style="left:1190px;top:661px"></div>
<svg class="abs" style="left:1198px;top:666px" width="10" height="8" viewBox="0 0 10 8"><path d="M1 2 L5 6 L9 2" fill="none" stroke="#222" stroke-width="2.4"/></svg>
<div class="oi" style="left:1220px;top:655px">7</div>
<svg class="abs" style="left:1295px;top:659px" width="13" height="10" viewBox="0 0 13 10"><path d="M1 5 L4.7 8.5 L12 1.2" fill="none" stroke="#0d8a36" stroke-width="2.8"/></svg>
<div class="t" style="left:1356px;top:656.7px;color:#333">2836</div>
<div class="row" style="top:710px;background:#fff"></div>
<div class="t" style="left:241.5px;top:720.7px;color:#333">8</div>
<div class="cb" style="left:287px;top:725px"></div>
<svg class="abs" style="left:334px;top:719px" width="14" height="14" viewBox="0 0 14 14"><path d="M0.3 13.7 L1.2 10.6 L3.4 12.8 Z" fill="#4a4a4a"/><path d="M1.9 9.9 L9.9 1.9 L12.1 4.1 L4.1 12.1 Z" fill="#4a4a4a"/><path d="M10.7 1.1 L11.4 0.4 Q12 -0.1 12.6 0.4 L13.6 1.4 Q14.1 2 13.6 2.6 L12.9 3.3 Z" fill="#4a4a4a"/></svg>
<div class="abs" style="left:373px;top:719px;width:39px;height:38px;background:#fff"></div>
<svg class="abs" style="left:375px;top:720.5px" width="35" height="35" viewBox="0 0 35 35"><defs><clipPath id="c7"><circle cx="17.5" cy="17.5" r="17.5"/></clipPath></defs><circle cx="17.5" cy="17.5" r="17.5" fill="#0b7dc0"/><path d="M10 6.5 L25 6.5 L35 17 L35 35 L15 35 L10 28 Z" fill="#0a689e" clip-path="url(#c7)"/><path d="M13.5 6.5 H25 V27.5 H10 V10 Z" fill="#e9edf0"/><path d="M10 10 L13.5 6.5 V10 Z" fill="#c9cdd0"/><path d="M25 7 V27.5 H11" fill="none" stroke="#cfd3d6" stroke-width="0.8"/></svg>
<div class="t lnk" style="left:428px;top:720.7px">Medical &amp; Health</div>
<div class="ob" style="left:1159px;top:725px"></div>
<svg class="abs" style="left:1167px;top:729px" width="10" height="8" viewBox="0 0 10 8"><path d="M1 6 L5 2 L9 6" fill="none" stroke="#222" stroke-width="2.4"/></svg>
<div class="ob" style="left:1190px;top:725px"></div>
<svg class="abs" style="left:1198px;top:730px" width="10" height="8" viewBox="0 0 10 8"><path d="M1 2 L5 6 L9 2" fill="none" stroke="#222" stroke-width="2.4"/></svg>
<div class="oi" style="left:1220px;top:719px">8</div>
<svg class="abs" style="left:1295px;top:723px" width="13" height="10" viewBox="0 0 13 10"><path d="M1 5 L4.7 8.5 L12 1.2" fill="none" stroke="#0d8a36" stroke-width="2.8"/></svg>
<div class="t" style="left:1356px;top:720.7px;color:#333">2837</div>
<svg class="abs" style="left:0;top:0" width="1436" height="733" viewBox="0 0 1436 733"><rect x="14.5" y="196.5" width="208" height="489" fill="none" stroke="#f10000" stroke-width="5"/><path d="M672.5 325.5 L702.5 284 A89.8 66.8 0 1 1 729 302.5 Z" fill="#e9e9e9" stroke="#f10000" stroke-width="4.5" stroke-linejoin="round"/><path d="M673 514.5 L702.5 473.5 A89.8 66.8 0 1 1 728.5 492 Z" fill="#e9e9e9" stroke="#f10000" stroke-width="4.5" stroke-linejoin="round"/><path d="M672.5 325.5 L185 267" stroke="#f10000" stroke-width="5"/><path d="M164.5 264 L191 254.5 L188 280 Z" fill="#f10000"/><path d="M673 514.5 L178 670" stroke="#f10000" stroke-width="5"/><path d="M158.5 676.5 L178.5 657 L186.5 681.5 Z" fill="#f10000"/></svg>
<div class="t" style="left:676px;width:200px;text-align:center;top:218.7px;font-size:16px;color:#f10000">Need to add this</div>
<div class="t" style="left:676px;width:200px;text-align:center;top:238.7px;font-size:16px;color:#f10000">sub-category with all</div>
<div class="t" style="left:676px;width:200px;text-align:center;top:258.7px;font-size:16px;color:#f10000">its sub-categories</div>
<div class="t" style="left:676px;width:200px;text-align:center;top:397.9px;font-size:16px;color:#f10000">Need to add this</div>
<div class="t" style="left:676px;width:200px;text-align:center;top:417.7px;font-size:16px;color:#f10000">as a main category</div>
<div class="t" style="left:676px;width:200px;text-align:center;top:437.5px;font-size:16px;color:#f10000">under &lsquo;product</div>
<div class="t" style="left:676px;width:200px;text-align:center;top:457.29999999999995px;font-size:16px;color:#f10000">category&rsquo;</div>
<div class="abs" style="left:0;top:698px;width:1436px;height:35px;background:linear-gradient(rgba(255,255,255,0),rgba(255,255,255,.6))"></div>
</body></html>
